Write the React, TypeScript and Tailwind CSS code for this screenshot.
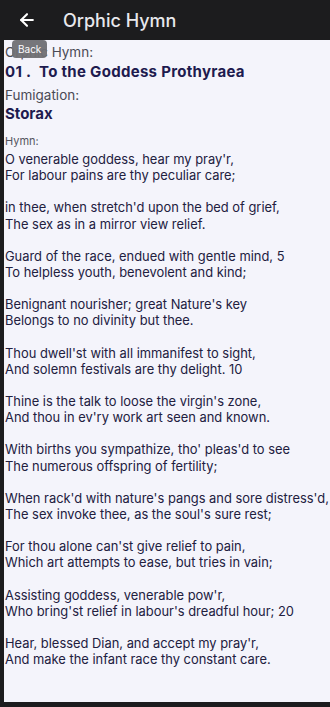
import { ArrowLeft } from "lucide-react";

const stanzas = [
  ["O venerable goddess, hear my pray'r,", "For labour pains are thy peculiar care;"],
  ["in thee, when stretch'd upon the bed of grief,", "The sex as in a mirror view relief."],
  ["Guard of the race, endued with gentle mind, 5", "To helpless youth, benevolent and kind;"],
  ["Benignant nourisher; great Nature's key", "Belongs to no divinity but thee."],
  ["Thou dwell'st with all immanifest to sight,", "And solemn festivals are thy delight. 10"],
  ["Thine is the talk to loose the virgin's zone,", "And thou in ev'ry work art seen and known."],
  ["With births you sympathize, tho' pleas'd to see", "The numerous offspring of fertility;"],
  ["When rack'd with nature's pangs and sore distress'd,", "The sex invoke thee, as the soul's sure rest;"],
  ["For thou alone can'st give relief to pain,", "Which art attempts to ease, but tries in vain;"],
  ["Assisting goddess, venerable pow'r,", "Who bring'st relief in labour's dreadful hour; 20"],
  ["Hear, blessed Dian, and accept my pray'r,", "And make the infant race thy constant care."],
];

export default function App() {
  return (
    <div className="w-[330px] h-[707px] bg-[#1c1c1e] flex flex-col font-['Inter',sans-serif] overflow-hidden">
      {/* top bar */}
      <div className="h-[40px] flex items-center pl-[17px] gap-[26px] text-white shrink-0">
        <ArrowLeft size={20} strokeWidth={2.5} />
        <span className="text-[18px] font-medium text-[#e8e8ec]">Orphic Hymn</span>
      </div>

      <div className="relative flex-1 ml-[4px] mb-[5px] bg-[#f4f4fb] pl-[1px] pt-[3px]">
        <div className="absolute left-[8px] top-[0px] bg-[#707074] text-white text-[10px] rounded-[4px] px-[6px] leading-[18px] opacity-95">
          Back
        </div>
        <div className="text-[13.5px] text-[#4a4a55] leading-[18px]">Orphic Hymn:</div>
        <div className="text-[15px] font-bold text-[#1e1b4f] leading-[20px] mt-[1px] tracking-[0.3px]">
          01 .&nbsp; To the Goddess Prothyraea
        </div>
        <div className="text-[13.5px] text-[#4a4a55] leading-[18px] mt-[4px]">Fumigation:</div>
        <div className="text-[15px] font-bold text-[#1e1b4f] leading-[20px]">Storax</div>
        <div className="text-[11px] text-[#555560] leading-[14px] mt-[10px]">Hymn:</div>
        <div className="mt-[4px] text-[12.9px] text-[#22203f] leading-[16.2px] flex flex-col gap-[16px]">
          {stanzas.map((s, i) => (
            <div key={i}>
              {s.map((l, j) => (
                <div key={j} className="whitespace-nowrap">{l}</div>
              ))}
            </div>
          ))}
        </div>
      </div>
    </div>
  );
}
